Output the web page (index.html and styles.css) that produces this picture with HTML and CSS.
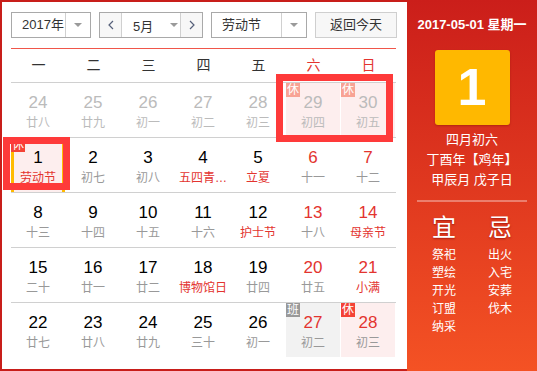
FILE: index.html
```html
<!DOCTYPE html>
<html lang="zh">
<head>
    <meta charset="UTF-8">
    <title>万年历</title>
    <link rel="stylesheet" href="styles.css">
</head>
<body>
<div id="cal">
    <div id="main">
        <div class="bar">
            <div class="sel year"><span class="val">2017年</span><span class="arr"><i></i></span></div>
            <div class="month">
                <span class="btn"><svg width="6" height="10" viewBox="0 0 6 10"><polyline points="5,1 1,5 5,9" fill="none" stroke="#56607a" stroke-width="1.2"/></svg></span>
                <span class="mval">5月<i></i></span>
                <span class="btn"><svg width="6" height="10" viewBox="0 0 6 10"><polyline points="1,1 5,5 1,9" fill="none" stroke="#56607a" stroke-width="1.2"/></svg></span>
            </div>
            <div class="sel hol"><span class="val">劳动节</span><span class="arr"><i></i></span></div>
            <div class="today">返回今天</div>
        </div>
        <div class="line"></div>
        <ul class="week">
            <li>一</li><li>二</li><li>三</li><li>四</li><li>五</li><li class="red">六</li><li class="red">日</li>
        </ul>
        <div class="row">
            <div class="cell other"><b>24</b><span>廿八</span></div>
            <div class="cell other"><b>25</b><span>廿九</span></div>
            <div class="cell other"><b>26</b><span>初一</span></div>
            <div class="cell other"><b>27</b><span>初二</span></div>
            <div class="cell other"><b>28</b><span>初三</span></div>
            <div class="cell other rest"><em class="tag fade">休</em><b>29</b><span>初四</span></div>
            <div class="cell other rest"><em class="tag fade">休</em><b>30</b><span>初五</span></div>
        </div>
        <div class="row">
            <div class="cell rest now"><em class="tag">休</em><b>1</b><span class="fest">劳动节</span></div>
            <div class="cell"><b>2</b><span>初七</span></div>
            <div class="cell"><b>3</b><span>初八</span></div>
            <div class="cell"><b>4</b><span class="fest cut">五四青年节</span></div>
            <div class="cell"><b>5</b><span class="fest">立夏</span></div>
            <div class="cell wk"><b>6</b><span>十一</span></div>
            <div class="cell wk"><b>7</b><span>十二</span></div>
        </div>
        <div class="row">
            <div class="cell"><b>8</b><span>十三</span></div>
            <div class="cell"><b>9</b><span>十四</span></div>
            <div class="cell"><b>10</b><span>十五</span></div>
            <div class="cell"><b>11</b><span>十六</span></div>
            <div class="cell"><b>12</b><span class="fest">护士节</span></div>
            <div class="cell wk"><b>13</b><span>十八</span></div>
            <div class="cell wk"><b>14</b><span class="fest">母亲节</span></div>
        </div>
        <div class="row">
            <div class="cell"><b>15</b><span>二十</span></div>
            <div class="cell"><b>16</b><span>廿一</span></div>
            <div class="cell"><b>17</b><span>廿二</span></div>
            <div class="cell"><b>18</b><span class="fest">博物馆日</span></div>
            <div class="cell"><b>19</b><span>廿四</span></div>
            <div class="cell wk"><b>20</b><span>廿五</span></div>
            <div class="cell wk"><b>21</b><span class="fest">小满</span></div>
        </div>
        <div class="row">
            <div class="cell"><b>22</b><span>廿七</span></div>
            <div class="cell"><b>23</b><span>廿八</span></div>
            <div class="cell"><b>24</b><span>廿九</span></div>
            <div class="cell"><b>25</b><span>三十</span></div>
            <div class="cell"><b>26</b><span>初一</span></div>
            <div class="cell wk work"><em class="tag gray">班</em><b>27</b><span>初二</span></div>
            <div class="cell wk rest"><em class="tag">休</em><b>28</b><span>初三</span></div>
        </div>
        <div class="mark m1"></div>
        <div class="mark m2"></div>
    </div>
    <div id="side">
        <p class="date">2017-05-01 星期一</p>
        <div class="big">1</div>
        <p class="lunar">四月初六</p>
        <p class="lunar">丁酉年【鸡年】</p>
        <p class="lunar">甲辰月 戊子日</p>
        <div class="sep"></div>
        <div class="yiji">
            <div class="col">
                <h3>宜</h3>
                <p>祭祀</p><p>塑绘</p><p>开光</p><p>订盟</p><p>纳采</p>
            </div>
            <div class="col">
                <h3>忌</h3>
                <p>出火</p><p>入宅</p><p>安葬</p><p>伐木</p>
            </div>
        </div>
    </div>
</div>
</body>
</html>
```
FILE: styles.css
```css
*{
    margin: 0;
    padding: 0;
}
body{
    font-family: "Liberation Sans", "Noto Sans CJK SC", sans-serif;
    color: #333;
}
#cal{
    display: flex;
    width: 537px;
    height: 371px;
}
#main{
    position: relative;
    width: 396px;
    border: solid 2px #c81e1a;
    border-right: 0;
    padding: 10px 0 0 9px;
    background: #fff;
}
.bar{
    display: flex;
    gap: 8px;
    height: 26px;
    font-size: 13px;
}
.sel{
    display: flex;
    box-sizing: border-box;
    height: 26px;
    border: solid 1px #a9a9a9;
    background: #fff;
}
.sel .val{
    flex: 1;
    line-height: 24px;
    padding-left: 10px;
}
.sel .arr{
    width: 24px;
    border-left: solid 1px #d0d0d0;
    display: flex;
    align-items: center;
    justify-content: center;
}
.sel i, .mval i{
    width: 0;
    height: 0;
    border-left: 4px solid transparent;
    border-right: 4px solid transparent;
    border-top: 4px solid #9a9a9a;
}
.year{
    width: 80px;
}
.hol{
    width: 96px;
}
.month{
    display: flex;
    box-sizing: border-box;
    width: 104px;
    height: 26px;
    border: solid 1px #a9a9a9;
}
.month .btn{
    width: 21px;
    background: #f7f7f7;
    display: flex;
    align-items: center;
    justify-content: center;
}
.month .mval{
    width: 60px;
    box-sizing: border-box;
    border-left: solid 1px #d0d0d0;
    border-right: solid 1px #d0d0d0;
    background: #fff;
    display: flex;
    align-items: center;
    padding-left: 11px;
    gap: 17px;
}
.today{
    width: 82px;
    box-sizing: border-box;
    border: solid 1px #cfcfcf;
    background: #f7f7f7;
    text-align: center;
    line-height: 24px;
}
.line{
    width: 385px;
    height: 1px;
    background: #f0564a;
    margin-top: 10px;
}
.week{
    display: flex;
    list-style: none;
    height: 33px;
    line-height: 33px;
    font-size: 14px;
}
.week li{
    width: 55px;
    text-align: center;
}
.week .red{
    color: #e3342f;
}
.row{
    display: flex;
    box-sizing: border-box;
    width: 385px;
    height: 55px;
    border-top: solid 1px #d0d0d0;
}
.cell{
    position: relative;
    box-sizing: border-box;
    width: 54px;
    margin-right: 1px;
    padding-top: 9px;
    text-align: center;
}
.cell b{
    display: block;
    font-weight: normal;
    font-size: 17px;
    line-height: 22px;
    color: #000;
}
.cell span{
    display: block;
    font-size: 12px;
    line-height: 18px;
    color: #999;
    white-space: nowrap;
    overflow: hidden;
}
.cell .cut{
    width: 54px;
    text-overflow: ellipsis;
    text-align: left;
    padding-left: 3px;
    box-sizing: border-box;
}
.cell .fest{
    color: #e3342f;
}
.wk b{
    color: #e3342f;
}
.other b, .other span{
    color: #bbb;
}
.rest{
    background: #fdeeee;
}
.work{
    background: #f2f2f2;
}
.now{
    border-left: solid 3px #ffbb00;
    border-right: solid 3px #ffbb00;
}
.tag{
    position: absolute;
    left: 0;
    top: 0;
    width: 14px;
    height: 14px;
    line-height: 14px;
    font-size: 12px;
    font-style: normal;
    color: #fff;
    background: #f44336;
}
.now .tag{
    left: -3px;
}
.tag.fade{
    background: #f8a394;
}
.tag.gray{
    background: #999;
}
.mark{
    position: absolute;
    border: solid 7px #fe3a3a;
}
.m1{
    left: 1px;
    top: 135px;
    width: 53px;
    height: 39px;
}
.m2{
    left: 274px;
    top: 72px;
    width: 103px;
    height: 54px;
}
#side{
    flex: 1;
    display: flex;
    flex-direction: column;
    align-items: center;
    padding-top: 15px;
    color: #fff;
    background: linear-gradient(#cb1e1a, #f45224);
}
.date{
    font-size: 13px;
    font-weight: bold;
    line-height: 20px;
}
.big{
    width: 75px;
    height: 75px;
    margin-top: 15px;
    margin-bottom: 5px;
    border-radius: 3px;
    background: #ffb800;
    box-shadow: 0 1px 2px rgba(120, 20, 0, .4);
    text-align: center;
    line-height: 75px;
    font-size: 52px;
    font-weight: bold;
}
.lunar{
    font-size: 13px;
    line-height: 20px;
}
.sep{
    width: 110px;
    height: 2px;
    margin-top: 10px;
    background: rgba(255, 255, 255, .35);
}
.yiji{
    display: flex;
    margin-top: 11px;
}
.yiji .col{
    width: 56px;
    text-align: center;
}
.yiji h3{
    font-size: 24px;
    font-weight: normal;
    line-height: 30px;
    margin-bottom: 3px;
    text-shadow: 0 1px 2px rgba(120, 0, 0, .6);
}
.yiji p{
    font-size: 12px;
    line-height: 18px;
}
```
